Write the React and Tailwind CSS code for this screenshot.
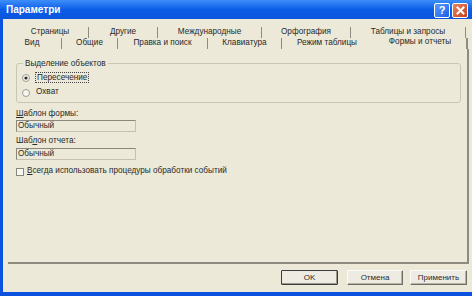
import React from "react";

const font = { fontFamily: '"Liberation Sans", Arial, sans-serif' };

const TopTab = ({ w, label, sep = true }) => (
  <div
    className={`h-full flex items-center justify-center ${w} ${sep ? "border-r border-[#8e8c80]" : ""}`}
  >
    {label}
  </div>
);

const Radio = ({ checked }) => (
  <svg width="8" height="8" viewBox="0 0 8 8" className="shrink-0">
    <circle cx="4" cy="4" r="3.5" fill="#f7f6f1" stroke="#9d9b8f" strokeWidth="1" />
    {checked && <circle cx="4" cy="4" r="1.6" fill="#2a2a2a" />}
  </svg>
);

const Button = ({ w, ml, children, primary }) => (
  <button
    className={`h-[15px] ${w} ${ml} text-[8px] leading-none text-[#2a2a2a] bg-[#eeece2] rounded-[1px] ${
      primary
        ? "border border-[#3c3c3c] shadow-[inset_-1px_-1px_0_#9a988c]"
        : "border-t border-l border-t-[#fbfbf8] border-l-[#fbfbf8] border-b border-r border-b-[#6f6d64] border-r-[#6f6d64] shadow-[inset_-1px_-1px_0_#b4b2a6]"
    }`}
  >
    {children}
  </button>
);

export default function App() {
  return (
    <div className="w-[472px] h-[296px] flex flex-col bg-[#ECE9D8] text-[8.2px] text-[#2a2a2a]" style={font}>
      {/* title bar */}
      <div className="h-[19px] shrink-0 flex items-center justify-between bg-gradient-to-b from-[#3d8ef9] via-[#0b5de8] to-[#0a55dc] pl-[6px] pr-[4px]">
        <span className="text-white font-bold text-[10px] leading-none">Параметри</span>
        <div className="flex gap-[2px] pt-[1px]">
          <div className="w-[16px] h-[15px] rounded-[2px] border border-white bg-gradient-to-br from-[#5a9bff] to-[#1a5ee8] flex items-center justify-center text-white font-bold text-[11px] leading-none">
            ?
          </div>
          <div className="w-[16px] h-[15px] rounded-[2px] border border-white bg-gradient-to-br from-[#e8845e] to-[#c4401a] flex items-center justify-center">
            <svg width="9" height="9" viewBox="0 0 9 9">
              <path d="M1.5 1.5 L7.5 7.5 M7.5 1.5 L1.5 7.5" stroke="white" strokeWidth="2" strokeLinecap="square" />
            </svg>
          </div>
        </div>
      </div>

      {/* body */}
      <div className="flex-1 flex flex-col border-l-[3px] border-b-[4px] border-[#0a52de]">
        {/* tab rows */}
        <div className="flex h-[11px] mt-[8px] pl-[9px] leading-none">
          <TopTab w="w-[77px]" label="Страницы" />
          <TopTab w="w-[69px]" label="Другие" />
          <TopTab w="w-[104px]" label="Международные" />
          <TopTab w="w-[89px]" label="Орфография" />
          <TopTab w="w-[115px]" label="Таблицы и запросы" />
        </div>
        <div className="flex h-[11px] leading-none">
          <TopTab w="w-[59px]" label="Вид" />
          <TopTab w="w-[56px]" label="Общие" />
          <TopTab w="w-[90px]" label="Правка и поиск" />
          <TopTab w="w-[74px]" label="Клавиатура" />
          <TopTab w="w-[90px]" label="Режим таблицы" sep={false} />
          <div className="w-[96px] h-full flex items-start justify-center shadow-[inset_-2px_0_0_#8e8c80]">
            <span>Формы и отчеты</span>
          </div>
        </div>

        {/* tab panel */}
        <div className="ml-[5px] w-[461px] h-[215px] shrink-0 shadow-[inset_-2px_-2px_0_#8e8c80] flex flex-col px-[8px] leading-none">
          <fieldset className="mt-[9px] border border-[#c9c6b6] rounded-[3px] pt-[1px] pb-[2px] pl-[5px]">
            <legend className="ml-[1px] px-[2px] h-[11px] leading-[11px]">Выделение объектов</legend>
            <div className="h-[15px] flex items-center gap-[5px]">
              <Radio checked />
              <span className="border border-dotted border-[#444] px-[1px] leading-[9px]">Пересечение</span>
            </div>
            <div className="h-[15px] flex items-center gap-[6px]">
              <Radio />
              <span>Охват</span>
            </div>
          </fieldset>

          <div className="mt-[5px] h-[11px] leading-[11px]">
            <span className="underline">Ш</span>аблон формы:
          </div>
          <div className="mt-[1px] w-[120px] h-[12px] border border-t-[#8a887c] border-l-[#8a887c] border-b-[#c4c1b2] border-r-[#c4c1b2] flex items-center pl-[1px]">
            Обычный
          </div>

          <div className="mt-[3px] h-[11px] leading-[11px]">
            Шаб<span className="underline">л</span>он отчета:
          </div>
          <div className="mt-[2px] w-[120px] h-[12px] border border-t-[#8a887c] border-l-[#8a887c] border-b-[#c4c1b2] border-r-[#c4c1b2] flex items-center pl-[1px]">
            Обычный
          </div>

          <div className="mt-[6px] h-[11px] flex items-center gap-[3px]">
            <div className="w-[8px] h-[8px] border border-[#8a887c] bg-[#f7f6f1]" />
            <span>
              <span className="underline">В</span>сегда использовать процедуры обработки событий
            </span>
          </div>
        </div>

        {/* buttons */}
        <div className="flex justify-end pr-[5px] mt-[6px]">
          <Button w="w-[57px]" primary>OK</Button>
          <Button w="w-[56px]" ml="ml-[9px]">Отмена</Button>
          <Button w="w-[57px]" ml="ml-[7px]">Применить</Button>
        </div>
      </div>
    </div>
  );
}
